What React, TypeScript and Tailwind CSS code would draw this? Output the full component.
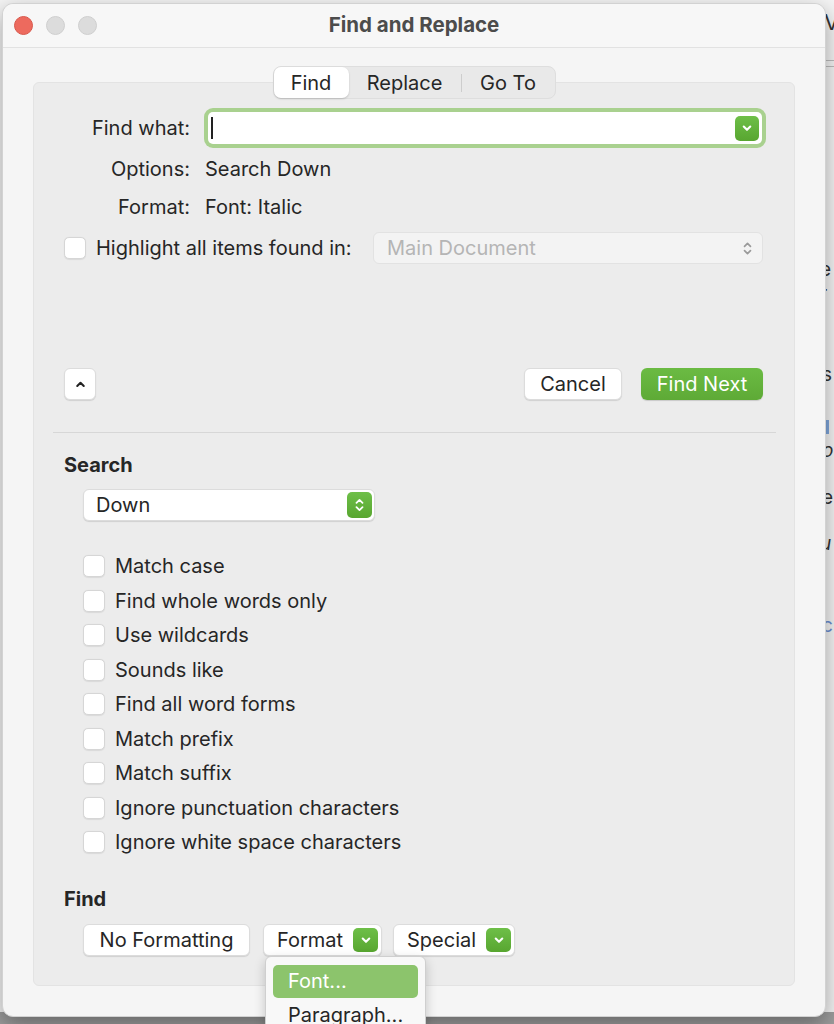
import React from "react";

const options = [
  "Match case",
  "Find whole words only",
  "Use wildcards",
  "Sounds like",
  "Find all word forms",
  "Match prefix",
  "Match suffix",
  "Ignore punctuation characters",
  "Ignore white space characters",
];

function ChevronDown({ className = "" }: { className?: string }) {
  return (
    <svg viewBox="0 0 12 12" className={className} fill="none">
      <path d="M3.2 4.8 6 7.6l2.8-2.8" stroke="currentColor" strokeWidth="1.8" strokeLinecap="round" strokeLinejoin="round" />
    </svg>
  );
}

function UpDown({ className = "" }: { className?: string }) {
  return (
    <svg viewBox="0 0 12 16" className={className} fill="none">
      <path d="M3.2 6 6 3.2 8.8 6M3.2 10 6 12.8 8.8 10" stroke="currentColor" strokeWidth="1.6" strokeLinecap="round" strokeLinejoin="round" />
    </svg>
  );
}

function GreenButton({ className = "" }: { className?: string }) {
  return (
    <span
      className={`flex items-center justify-center rounded-[5px] bg-gradient-to-b from-[#6ebf48] to-[#58a630] text-white ${className}`}
    >
      <ChevronDown className="w-[14px] h-[14px]" />
    </span>
  );
}

function Checkbox() {
  return (
    <span className="w-[22px] h-[22px] shrink-0 rounded-[5px] bg-white border border-[#d6d6d6] shadow-[0_0.5px_1px_rgba(0,0,0,0.08)]" />
  );
}

function PushButton({
  children,
  className = "",
}: {
  children: React.ReactNode;
  className?: string;
}) {
  return (
    <div
      className={`h-[32px] flex items-center rounded-[6px] bg-white border border-[#dcdcdc] shadow-[0_1px_1px_rgba(0,0,0,0.12)] text-[#262626] ${className}`}
    >
      {children}
    </div>
  );
}

export default function App() {
  return (
    <div className="relative w-[834px] h-[1024px] overflow-hidden bg-[#f4f4f4] font-[Inter,'Noto_Sans',sans-serif] text-[20px] text-[#262626]">
      {/* document behind the dialog */}
      <div className="absolute left-0 right-0 bottom-0 h-[12px] bg-[#9d9d9d]" />
      <div className="absolute left-[824px] top-[6px] text-[22px] text-[#333]">V</div>
      <div className="absolute left-[826px] top-[60px] w-[8px] h-[1px] bg-[#bdbdbd]" />
      <div className="absolute left-[826px] top-[66px] w-[8px] h-[1px] bg-[#bdbdbd]" />
      <div className="absolute left-[820px] top-[256px] text-[19px] text-[#333]">e</div>
      <div className="absolute left-[820px] top-[280px] text-[19px] text-[#333]">r</div>
      <div className="absolute left-[822px] top-[361px] text-[19px] text-[#333]">s</div>
      <div className="absolute left-[826px] top-[420px] w-[3px] h-[14px] bg-[#7fa7dc]" />
      <div className="absolute left-[822px] top-[437px] text-[19px] italic text-[#333]">o</div>
      <div className="absolute left-[822px] top-[484px] text-[19px] text-[#333]">e</div>
      <div className="absolute left-[820px] top-[530px] text-[19px] italic text-[#333]">u</div>
      <div className="absolute left-[822px] top-[612px] text-[19px] text-[#6b8fd1]">c</div>

      {/* dialog window */}
      <div className="absolute left-[2px] top-[3px] w-[824px] h-[1014px] rounded-[11px] bg-[#f5f5f5] border border-[#d2d2d2] shadow-[0_8px_22px_rgba(0,0,0,0.35)]">
        {/* title bar */}
        <div className="relative h-[44px] flex items-center justify-center border-b border-[#e2e2e2] bg-[#f7f7f7] rounded-t-[11px]">
          <div className="absolute left-[11px] top-[12px] flex gap-[13px]">
            <span className="w-[19px] h-[19px] rounded-full bg-[#ed6a5e] border border-[#d8584c]" />
            <span className="w-[19px] h-[19px] rounded-full bg-[#dcdcdc] border border-[#cfcfcf]" />
            <span className="w-[19px] h-[19px] rounded-full bg-[#dcdcdc] border border-[#cfcfcf]" />
          </div>
          <span className="text-[20.5px] font-bold text-[#4c4c4c]">Find and Replace</span>
        </div>

        {/* tabs */}
        <div className="relative z-10 mt-[18px] flex justify-center">
          <div className="flex items-center h-[33px] rounded-[8px] bg-[#e9e9e9] border border-[#dedede]">
            <div className="w-[75px] h-[31px] flex items-center justify-center rounded-[7px] bg-white shadow-[0_1px_2px_rgba(0,0,0,0.18)]">
              Find
            </div>
            <div className="w-[112px] text-center">Replace</div>
            <span className="w-px h-[18px] bg-[#cdcdcd]" />
            <div className="w-[93px] text-center">Go To</div>
          </div>
        </div>

        {/* content panel */}
        <div className="mx-[30px] -mt-[17px] rounded-[6px] bg-[#ececec] border border-[#e3e3e3] pt-[26px] pb-[29px] pl-[30px] pr-[31px]">
          {/* find what */}
          <div className="flex items-center h-[38px]">
            <span className="w-[126px] shrink-0 text-right">Find what:</span>
            <div className="ml-[18px] mr-[1px] flex-1 h-[32px] flex items-center rounded-[5px] bg-white ring-[4px] ring-[#a9d18f] pl-[3px] pr-[3px]">
              <span className="w-[2px] h-[22px] bg-[#222]" />
              <GreenButton className="ml-auto w-[24px] h-[25px]" />
            </div>
          </div>
          <div className="mt-[3px] flex items-center h-[38px]">
            <span className="w-[126px] shrink-0 text-right">Options:</span>
            <span className="ml-[15px]">Search Down</span>
          </div>
          <div className="flex items-center h-[38px]">
            <span className="w-[126px] shrink-0 text-right">Format:</span>
            <span className="ml-[15px]">Font: Italic</span>
          </div>
          <div className="mt-[6px] flex items-center h-[32px]">
            <Checkbox />
            <span className="ml-[10px]">Highlight all items found in:</span>
            <div className="ml-auto w-[390px] h-[32px] flex items-center rounded-[6px] bg-[#f3f3f3] border border-[#e2e2e2] pl-[13px] pr-[8px] text-[#b5b5b5]">
              Main Document
              <UpDown className="ml-auto w-[13px] h-[17px] text-[#9a9a9a]" />
            </div>
          </div>

          {/* buttons */}
          <div className="mt-[104px] flex items-center h-[32px]">
            <PushButton className="w-[32px] justify-center">
              <svg viewBox="0 0 12 12" className="w-[13px] h-[13px]" fill="none">
                <path d="M3 7.4 6 4.4l3 3" stroke="#222" strokeWidth="1.9" strokeLinecap="round" strokeLinejoin="round" />
              </svg>
            </PushButton>
            <PushButton className="ml-auto w-[98px] justify-center">Cancel</PushButton>
            <div className="ml-[19px] w-[122px] h-[32px] flex items-center justify-center rounded-[6px] bg-gradient-to-b from-[#6bbb43] to-[#5eaa36] text-white shadow-[0_1px_1px_rgba(0,0,0,0.15)]">
              Find Next
            </div>
          </div>

          <div className="mt-[32px] -ml-[11px] -mr-[13px] h-px bg-[#d7d7d7]" />

          {/* search section */}
          <div className="mt-[20px] h-[24px] leading-[24px] font-bold">Search</div>
          <div className="mt-[12px] ml-[19px] w-[292px] h-[32px] flex items-center rounded-[6px] bg-white border border-[#dcdcdc] shadow-[0_1px_1px_rgba(0,0,0,0.12)] pl-[12px] pr-[2px]">
            Down
            <span className="ml-auto w-[25px] h-[26px] flex items-center justify-center rounded-[5px] bg-gradient-to-b from-[#6ebf48] to-[#58a630] text-white">
              <UpDown className="w-[13px] h-[18px]" />
            </span>
          </div>

          <div className="mt-[28px] ml-[19px] flex flex-col">
            {options.map((label) => (
              <div key={label} className="h-[34.5px] flex items-center">
                <Checkbox />
                <span className="ml-[10px]">{label}</span>
              </div>
            ))}
          </div>

          {/* find section */}
          <div className="mt-[27px] h-[24px] leading-[24px] font-bold">Find</div>
          <div className="mt-[13px] ml-[19px] flex items-center">
            <PushButton className="w-[167px] justify-center">No Formatting</PushButton>
            <div className="relative ml-[13px]">
              <PushButton className="w-[119px] pl-[13px] pr-[3px]">
                Format
                <GreenButton className="ml-auto w-[25px] h-[24px]" />
              </PushButton>
              <div className="absolute left-[2px] top-full z-20 w-[161px] rounded-[6px] bg-[#f8f8f8] border border-[#cfcfcf] shadow-[0_4px_12px_rgba(0,0,0,0.2)] pt-[8px] px-[7px] pb-[10px]">
                <div className="h-[33px] flex items-center rounded-[5px] bg-[#8cc46c] text-white pl-[15px]">Font...</div>
                <div className="h-[34px] flex items-center pl-[15px]">Paragraph...</div>
              </div>
            </div>
            <PushButton className="ml-[11px] w-[122px] pl-[13px] pr-[3px]">
              Special
              <GreenButton className="ml-auto w-[25px] h-[24px]" />
            </PushButton>
          </div>
        </div>
      </div>
    </div>
  );
}
